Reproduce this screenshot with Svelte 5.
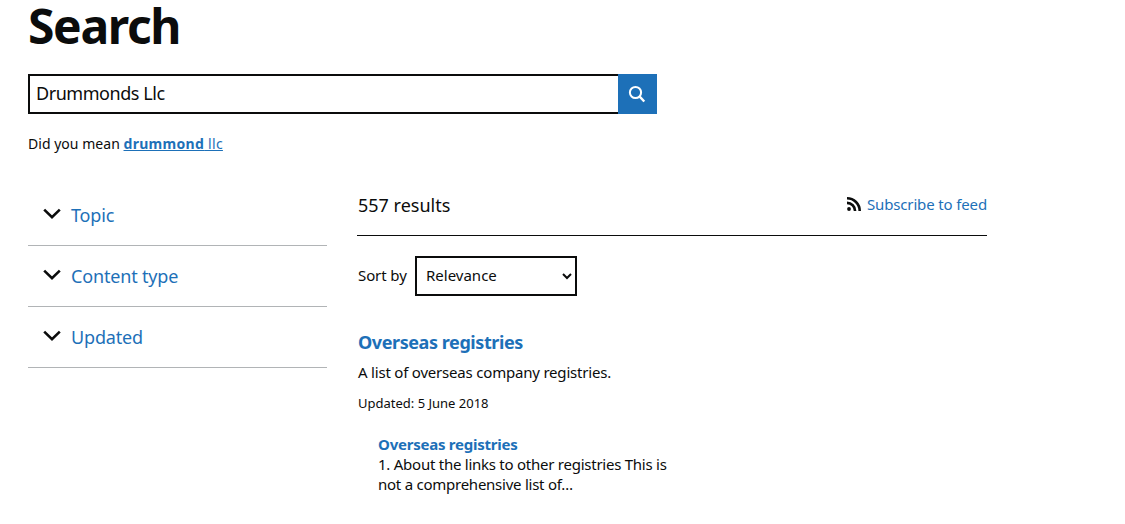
<script>
  const filters = ['Topic', 'Content type', 'Updated'];
</script>

<div class="page">
  <h1>Search</h1>

  <form class="search" onsubmit={(e) => e.preventDefault()}>
    <input class="search-input" type="text" value="Drummonds Llc" aria-label="Search" />
    <button class="search-btn" aria-label="Search">
      <svg width="20" height="20" viewBox="0 0 20 20" fill="none" stroke="#fff" stroke-width="2">
        <circle cx="7.5" cy="8.5" r="5.6" />
        <path d="M11.7 12.7 L16.3 17.5" stroke-width="2.4" />
      </svg>
    </button>
  </form>

  <p class="suggest">Did you mean <a href="#s"><b>drummond</b> llc</a></p>

  <div class="columns">
    <aside class="filters">
      {#each filters as f}
        <div class="filter">
          <svg class="chev" width="18" height="12" viewBox="0 0 18 12" fill="none" stroke="#0b0c0c" stroke-width="2.6">
            <path d="M1.2 1.6 L9 9.2 L16.8 1.6" />
          </svg>
          <span>{f}</span>
        </div>
      {/each}
    </aside>

    <main class="results">
      <div class="summary">
        <span class="count">557 results</span>
        <a class="feed" href="#f">
          <svg width="14" height="14" viewBox="0 0 14 14" fill="#0b0c0c">
            <circle cx="2" cy="12" r="1.9" />
            <path d="M0 4.6 V7.2 A6.8 6.8 0 0 1 6.8 14 H9.4 A9.4 9.4 0 0 0 0 4.6Z" />
            <path d="M0 0 V2.6 A11.4 11.4 0 0 1 11.4 14 H14 A14 14 0 0 0 0 0Z" />
          </svg>
          <span>Subscribe to feed</span>
        </a>
      </div>

      <div class="sort">
        <label for="sort">Sort by</label>
        <select id="sort">
          <option>Relevance</option>
        </select>
      </div>

      <article>
        <h2><a href="#r">Overseas registries</a></h2>
        <p class="desc">A list of overseas company registries.</p>
        <p class="meta">Updated: 5 June 2018</p>
        <div class="sub">
          <a href="#p">Overseas registries</a>
          <p>1. About the links to other registries This is not a comprehensive list of…</p>
        </div>
      </article>
    </main>
  </div>
</div>

<style>
  :global(body) {
    margin: 0;
    background: #fff;
    overflow: hidden;
  }
  .page {
    height: 524px;
    overflow: hidden;
    padding-left: 28px;
    box-sizing: border-box;
    font-family: "Noto Sans", sans-serif;
    color: #0b0c0c;
  }
  h1 {
    margin: 0;
    padding-top: 1px;
    font-size: 48px;
    line-height: 50px;
    height: 73px;
    font-weight: 700;
    letter-spacing: -1.35px;
    font-family: "Noto Sans", sans-serif;
  }
  .search {
    display: flex;
    width: 629px;
    height: 40px;
  }
  .search-input {
    flex: 1;
    min-width: 0;
    box-sizing: border-box;
    height: 40px;
    border: 2px solid #0b0c0c;
    border-right: 0;
    padding: 0 6px 2px;
    font: 18px/1 "Noto Sans", sans-serif;
    letter-spacing: -0.45px;
    color: #0b0c0c;
    outline: none;
    border-radius: 0;
  }
  .search-btn {
    width: 39px;
    height: 40px;
    background: #1d70b8;
    border: 0;
    padding: 0;
    display: flex;
    align-items: center;
    justify-content: center;
  }
  .suggest {
    margin: 20px 0 0;
    font-size: 14px;
    line-height: 20px;
    letter-spacing: 0.03px;
  }
  .suggest a {
    letter-spacing: 0.3px;
  }
  a {
    color: #1d70b8;
  }
  .columns {
    display: flex;
    margin-top: 31px;
  }
  .filters {
    width: 299px;
    margin-right: 30px;
    flex: none;
  }
  .filter {
    height: 60px;
    border-bottom: 1px solid #b1b4b6;
    display: flex;
    align-items: center;
    gap: 10px;
    padding-left: 15px;
    font-size: 18px;
    letter-spacing: -0.17px;
    color: #1d70b8;
  }
  .chev {
    position: relative;
    top: -1px;
  }
  .results {
    width: 630px;
    flex: none;
    padding-top: 3px;
  }
  .summary {
    height: 47px;
    display: flex;
    justify-content: space-between;
    align-items: center;
    border-bottom: 1px solid #0b0c0c;
    font-size: 18px;
  }
  .count {
    position: relative;
    top: -7px;
    left: 1px;
  }
  .feed {
    display: flex;
    align-items: center;
    gap: 6px;
    font-size: 15px;
    letter-spacing: -0.14px;
    text-decoration: none;
    position: relative;
    top: -8px;
  }
  .sort {
    display: flex;
    align-items: center;
    gap: 8px;
    margin: 20px 0 0 1px;
    font-size: 15px;
  }
  .sort label {
    position: relative;
    top: -1px;
    letter-spacing: -0.1px;
    width: 49px;
  }
  select {
    width: 162px;
    height: 40px;
    border: 2px solid #0b0c0c;
    border-radius: 0;
    background: #fff;
    padding: 0 5px 2px;
    font: 15px "Noto Sans", sans-serif;
    color: #0b0c0c;
  }
  article {
    margin: 33px 0 0 1px;
  }
  h2 {
    margin: 0;
    font-size: 18px;
    line-height: 26px;
    font-weight: 700;
    letter-spacing: -0.42px;
    font-family: "Noto Sans", sans-serif;
  }
  h2 a, .sub a {
    text-decoration: none;
  }
  .desc {
    margin: 7px 0 0;
    font-size: 15px;
    line-height: 20px;
    letter-spacing: -0.2px;
  }
  .meta {
    margin: 11px 0 0;
    font-size: 13px;
    line-height: 20px;
  }
  .sub {
    margin: 21px 0 0 20px;
    width: 300px;
    font-size: 15px;
    line-height: 20px;
    letter-spacing: -0.25px;
  }
  .sub a {
    font-weight: 700;
    display: block;
    letter-spacing: -0.24px;
  }
  .sub p {
    margin: 0;
  }
</style>
